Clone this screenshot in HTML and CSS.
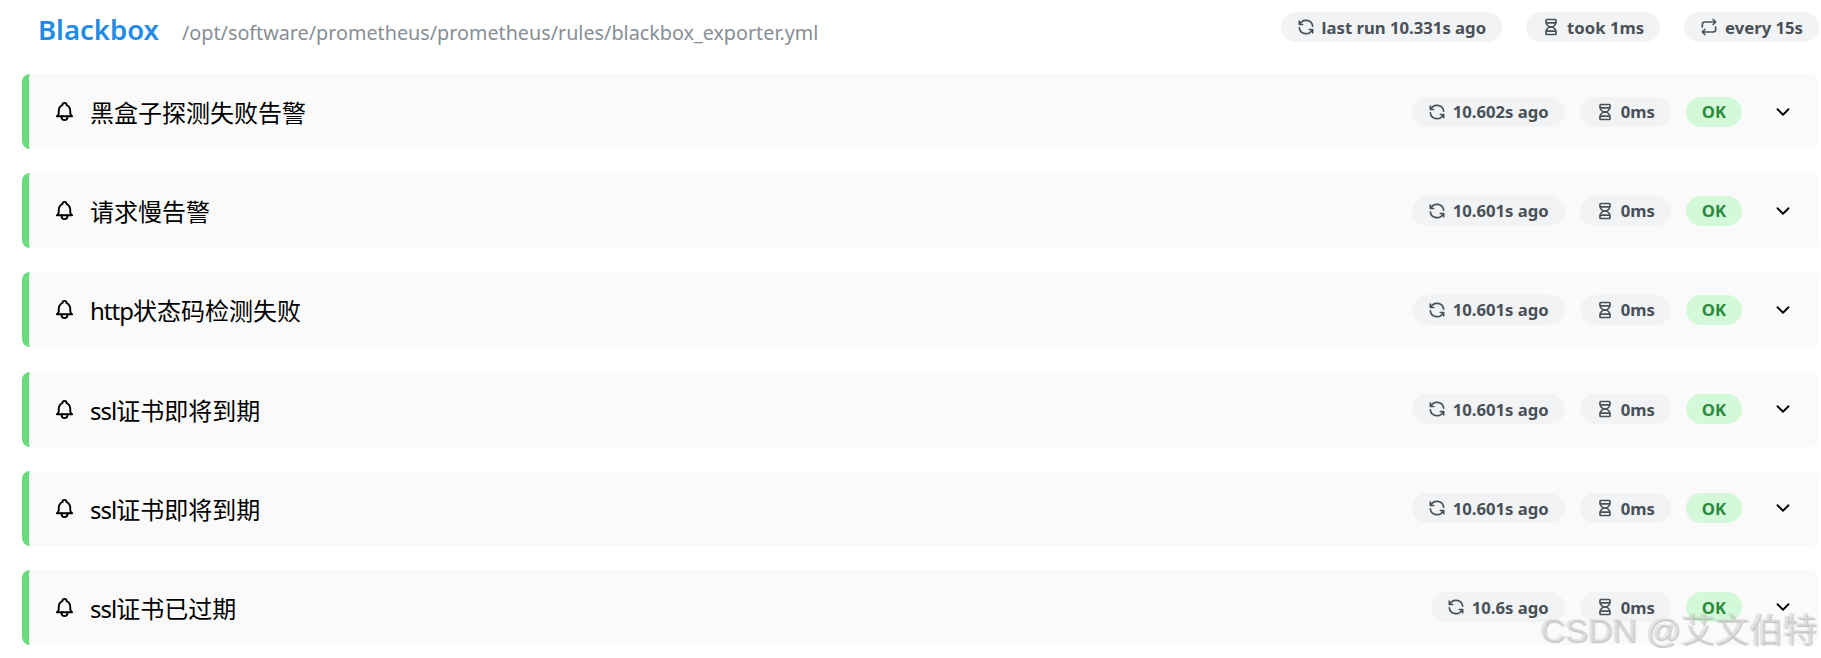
FILE: index.html
```html
<!DOCTYPE html>
<html lang="zh">
<head>
    <meta charset="UTF-8">
    <title>Blackbox rules</title>
    <link rel="stylesheet" href="styles.css">
</head>
<body>
    <svg class="icon-defs" width="0" height="0">
        <symbol id="i-bell" viewBox="0 0 24 24"><path d="M10 5a2 2 0 1 1 4 0a7 7 0 0 1 4 6v3a4 4 0 0 0 2 3h-16a4 4 0 0 0 2 -3v-3a7 7 0 0 1 4 -6"/><path d="M9 17v1a3 3 0 0 0 6 0v-1"/></symbol>
        <symbol id="i-refresh" viewBox="0 0 24 24"><path d="M20 11a8.1 8.1 0 0 0 -15.5 -2m-.5 -4v4h4"/><path d="M4 13a8.1 8.1 0 0 0 15.5 2m.5 4v-4h-4"/></symbol>
        <symbol id="i-hourglass" viewBox="0 0 24 24"><path d="M6.5 7h11"/><path d="M6.5 17h11"/><path d="M6 20v-2a6 6 0 1 1 12 0v2a1 1 0 0 1 -1 1h-10a1 1 0 0 1 -1 -1z"/><path d="M6 4v2a6 6 0 1 0 12 0v-2a1 1 0 0 0 -1 -1h-10a1 1 0 0 0 -1 1z"/></symbol>
        <symbol id="i-repeat" viewBox="0 0 24 24"><path d="M4 12v-3a3 3 0 0 1 3 -3h13m-3 -3l3 3l-3 3"/><path d="M20 12v3a3 3 0 0 1 -3 3h-13m3 3l-3 -3l3 -3"/></symbol>
        <symbol id="i-chevron" viewBox="0 0 24 24"><path d="M6 9l6 6l6 -6"/></symbol>
    </svg>

    <div class="page">
        <div class="group-header">
            <div class="group-title">
                <span class="group-name">Blackbox</span>
                <span class="group-file">/opt/software/prometheus/prometheus/rules/blackbox_exporter.yml</span>
            </div>
            <div class="group-stats">
                <span class="pill"><svg class="icon"><use href="#i-refresh"/></svg>last run 10.331s ago</span>
                <span class="pill"><svg class="icon"><use href="#i-hourglass"/></svg>took 1ms</span>
                <span class="pill"><svg class="icon"><use href="#i-repeat"/></svg>every 15s</span>
            </div>
        </div>

        <div class="rules">
            <div class="rule">
                <svg class="bell"><use href="#i-bell"/></svg>
                <span class="rule-name">黑盒子探测失败告警</span>
                <span class="pill"><svg class="icon"><use href="#i-refresh"/></svg>10.602s ago</span>
                <span class="pill"><svg class="icon"><use href="#i-hourglass"/></svg>0ms</span>
                <span class="pill pill-ok">OK</span>
                <svg class="chevron"><use href="#i-chevron"/></svg>
            </div>
            <div class="rule">
                <svg class="bell"><use href="#i-bell"/></svg>
                <span class="rule-name">请求慢告警</span>
                <span class="pill"><svg class="icon"><use href="#i-refresh"/></svg>10.601s ago</span>
                <span class="pill"><svg class="icon"><use href="#i-hourglass"/></svg>0ms</span>
                <span class="pill pill-ok">OK</span>
                <svg class="chevron"><use href="#i-chevron"/></svg>
            </div>
            <div class="rule">
                <svg class="bell"><use href="#i-bell"/></svg>
                <span class="rule-name"><span class="latin">http</span>状态码检测失败</span>
                <span class="pill"><svg class="icon"><use href="#i-refresh"/></svg>10.601s ago</span>
                <span class="pill"><svg class="icon"><use href="#i-hourglass"/></svg>0ms</span>
                <span class="pill pill-ok">OK</span>
                <svg class="chevron"><use href="#i-chevron"/></svg>
            </div>
            <div class="rule">
                <svg class="bell"><use href="#i-bell"/></svg>
                <span class="rule-name"><span class="latin">ssl</span>证书即将到期</span>
                <span class="pill"><svg class="icon"><use href="#i-refresh"/></svg>10.601s ago</span>
                <span class="pill"><svg class="icon"><use href="#i-hourglass"/></svg>0ms</span>
                <span class="pill pill-ok">OK</span>
                <svg class="chevron"><use href="#i-chevron"/></svg>
            </div>
            <div class="rule">
                <svg class="bell"><use href="#i-bell"/></svg>
                <span class="rule-name"><span class="latin">ssl</span>证书即将到期</span>
                <span class="pill"><svg class="icon"><use href="#i-refresh"/></svg>10.601s ago</span>
                <span class="pill"><svg class="icon"><use href="#i-hourglass"/></svg>0ms</span>
                <span class="pill pill-ok">OK</span>
                <svg class="chevron"><use href="#i-chevron"/></svg>
            </div>
            <div class="rule">
                <svg class="bell"><use href="#i-bell"/></svg>
                <span class="rule-name"><span class="latin">ssl</span>证书已过期</span>
                <span class="pill"><svg class="icon"><use href="#i-refresh"/></svg>10.6s ago</span>
                <span class="pill"><svg class="icon"><use href="#i-hourglass"/></svg>0ms</span>
                <span class="pill pill-ok">OK</span>
                <svg class="chevron"><use href="#i-chevron"/></svg>
            </div>
        </div>
    </div>

    <div class="watermark">CSDN @艾文伯特</div>
</body>
</html>
```

FILE: styles.css
```css
html, body {
    margin: 0;
    padding: 0;
    height: 100%;
    background: #fff;
    overflow: hidden;
    font-family: "Noto Sans", "Noto Sans CJK SC", sans-serif;
}
.icon-defs {
    position: absolute;
}
symbol {
    fill: none;
    stroke: currentColor;
    stroke-width: 2;
    stroke-linecap: round;
    stroke-linejoin: round;
}
.page {
    padding: 12px 2px 0 22px;
}
.group-header {
    display: flex;
    justify-content: space-between;
    align-items: flex-start;
    height: 62px;
    padding-left: 16px;
}
.group-title {
    display: flex;
    align-items: baseline;
    gap: 23px;
    line-height: 35px;
}
.group-name {
    color: #228be6;
    font-size: 27.5px;
    font-weight: 600;
}
.group-file {
    color: #868e96;
    font-size: 19.75px;
}
.group-stats {
    display: flex;
    gap: 24px;
}
.pill {
    display: inline-flex;
    align-items: center;
    gap: 6px;
    height: 30px;
    padding: 0 16px 0 15px;
    border-radius: 15px;
    background: #f1f3f5;
    color: #495057;
    font-size: 16.7px;
    font-weight: 700;
    white-space: nowrap;
}
.pill-ok {
    width: 56px;
    justify-content: center;
    padding: 0;
    background: #d3f9d8;
    color: #2b8a3e;
}
.icon {
    width: 20px;
    height: 20px;
}
.rules {
    display: flex;
    flex-direction: column;
    gap: 24.2px;
}
.rule {
    display: flex;
    align-items: center;
    gap: 15px;
    height: 75px;
    box-sizing: border-box;
    padding: 0 25px 0 24px;
    border-left: 7px solid #69db7c;
    border-radius: 8px;
    background: #fafafa;
}
.bell {
    width: 23px;
    height: 23px;
    color: #000;
}
.rule-name {
    flex: 1;
    margin-left: -1px;
    color: #000;
    font-size: 24px;
}
.latin {
    letter-spacing: -1px;
}
.chevron {
    width: 22px;
    height: 22px;
    margin-left: 15px;
    color: #000;
}
.watermark {
    position: absolute;
    right: 4px;
    bottom: 8px;
    color: rgba(255, 255, 255, 0.45);
    font-family: "Liberation Sans", "Noto Sans CJK SC", sans-serif;
    font-size: 34px;
    line-height: 40px;
    text-shadow: 1px 1px 1px rgba(0, 0, 0, 0.22), -1px 0 1px rgba(0, 0, 0, 0.12);
}
```
